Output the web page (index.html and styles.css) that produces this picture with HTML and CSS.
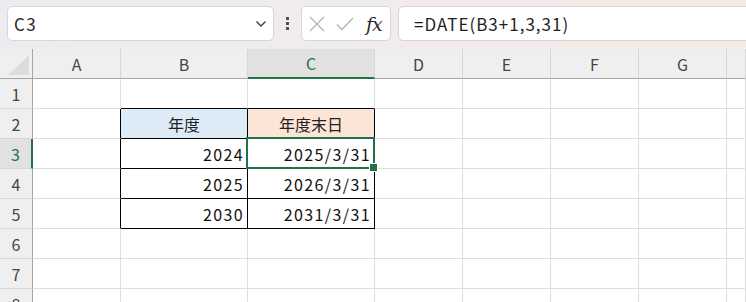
FILE: index.html
```html
<!DOCTYPE html>
<html lang="ja">
<head>
<meta charset="utf-8">
<link rel="stylesheet" href="styles.css">
</head>
<body>
<div class="topbar">
  <div class="namebox">
    <span class="namebox-text">C3</span>
    <svg class="chev" width="12" height="8" viewBox="0 0 12 8"><path d="M1.5 1.5 L6 6 L10.5 1.5" fill="none" stroke="#3a3a3a" stroke-width="1.3"/></svg>
  </div>
  <div class="dots"><i></i><i></i><i></i></div>
  <div class="fxbtns">
    <svg class="ico" width="16" height="16" viewBox="0 0 16 16"><path d="M1 1 L15 15 M15 1 L1 15" stroke="#b4b4b4" stroke-width="1.3" fill="none"/></svg>
    <svg class="ico" width="18" height="16" viewBox="0 0 18 16"><path d="M1 8.5 L6 13.5 L17 2" stroke="#b4b4b4" stroke-width="1.3" fill="none"/></svg>
    <span class="fx">fx</span>
  </div>
  <div class="formula">=DATE(B3+1,3,31)</div>
</div>
<div class="sheet">
  <div class="corner"><span class="tri"></span></div>
  <div class="ch">A</div>
  <div class="ch">B</div>
  <div class="ch ch-sel">C</div>
  <div class="ch">D</div>
  <div class="ch">E</div>
  <div class="ch">F</div>
  <div class="ch">G</div>
  <div class="ch"></div>

  <div class="rh">1</div>
  <div class="c"></div><div class="c bb"></div><div class="c bb"></div><div class="c"></div><div class="c"></div><div class="c"></div><div class="c"></div><div class="c"></div>

  <div class="rh">2</div>
  <div class="c br"></div><div class="c t hb">年度</div><div class="c t ho">年度末日</div><div class="c"></div><div class="c"></div><div class="c"></div><div class="c"></div><div class="c"></div>

  <div class="rh rh-sel">3</div>
  <div class="c br"></div><div class="c t num">2024</div><div class="c t num sel">2025/3/31</div><div class="c"></div><div class="c"></div><div class="c"></div><div class="c"></div><div class="c"></div>

  <div class="rh">4</div>
  <div class="c br"></div><div class="c t num">2025</div><div class="c t num">2026/3/31</div><div class="c"></div><div class="c"></div><div class="c"></div><div class="c"></div><div class="c"></div>

  <div class="rh">5</div>
  <div class="c br"></div><div class="c t num">2030</div><div class="c t num">2031/3/31</div><div class="c"></div><div class="c"></div><div class="c"></div><div class="c"></div><div class="c"></div>

  <div class="rh">6</div>
  <div class="c"></div><div class="c"></div><div class="c"></div><div class="c"></div><div class="c"></div><div class="c"></div><div class="c"></div><div class="c"></div>

  <div class="rh">7</div>
  <div class="c"></div><div class="c"></div><div class="c"></div><div class="c"></div><div class="c"></div><div class="c"></div><div class="c"></div><div class="c"></div>

  <div class="rh">8</div>
  <div class="c"></div><div class="c"></div><div class="c"></div><div class="c"></div><div class="c"></div><div class="c"></div><div class="c"></div><div class="c"></div>
</div>
</body>
</html>
```
FILE: styles.css
```css
* { box-sizing: border-box; }
html, body { margin: 0; padding: 0; }
body {
  width: 746px;
  height: 302px;
  overflow: hidden;
  background: #ffffff;
  font-family: "Noto Sans CJK JP", "Noto Sans", sans-serif;
  color: #1a1a1a;
}
.topbar {
  height: 49px;
  display: flex;
  align-items: flex-start;
  padding: 6px 0 0 7px;
  background: linear-gradient(90deg, #eeebf0 0%, #f1ecec 50%, #f3ebe6 100%);
  overflow: hidden;
}
.namebox {
  width: 267px;
  height: 35px;
  background: #fff;
  border: 1px solid #d9d5d8;
  border-radius: 5px;
  display: flex;
  align-items: center;
  justify-content: space-between;
  padding: 0 6px 0 6px;
}
.namebox-text {
  font-size: 17px;
  color: #262626;
  line-height: 1;
  letter-spacing: 1.5px;
}
.chev { margin-top: 1px; }
.dots {
  width: 27px;
  height: 35px;
  display: flex;
  flex-direction: column;
  align-items: center;
  justify-content: center;
  gap: 2px;
}
.dots i {
  display: block;
  width: 3px;
  height: 3px;
  background: #505050;
}
.fxbtns {
  width: 90px;
  height: 35px;
  background: #fff;
  border: 1px solid #d9d5d8;
  border-radius: 5px;
  display: flex;
  align-items: center;
  padding: 0 0 0 7px;
  gap: 11px;
}
.ico { display: block; }
.fx {
  font-family: "DejaVu Serif", "Liberation Serif", serif;
  font-style: italic;
  font-size: 19px;
  color: #2a2a2a;
  margin-left: 1px;
  letter-spacing: -1px;
}
.formula {
  flex: 1 0 auto;
  margin-left: 7px;
  margin-right: -10px;
  height: 35px;
  background: #fff;
  border: 1px solid #d9d5d8;
  border-radius: 5px;
  padding-left: 15px;
  display: flex;
  align-items: center;
  font-size: 17px;
  letter-spacing: 1px;
  color: #1e1e1e;
}
.sheet {
  display: grid;
  grid-template-columns: 33px 88px 127px 127px 88px 88px 88px 88px 1fr;
  grid-auto-rows: 30px;
}
.sheet > div {
  border-right: 1px solid #dedede;
  border-bottom: 1px solid #dedede;
  display: flex;
  align-items: center;
  font-size: 16px;
}
.corner {
  background: #efefef;
  position: relative;
  border-right-color: #a6a6a6 !important;
  border-bottom-color: #a6a6a6 !important;
}
.tri {
  position: absolute;
  left: 8px;
  top: 6px;
  width: 0;
  height: 0;
  border-style: solid;
  border-width: 0 0 20px 21px;
  border-color: transparent transparent #dcdcdc transparent;
}
.ch {
  background: #efefef;
  justify-content: center;
  color: #454545;
  border-right-color: #d6d6d6 !important;
  border-bottom-color: #a6a6a6 !important;
}
.ch-sel {
  background: #e1e1e1;
  color: #217346;
  border-bottom: 2px solid #217346 !important;
}
.rh {
  background: #efefef;
  justify-content: center;
  color: #454545;
  border-right-color: #a6a6a6 !important;
  border-bottom-color: #d6d6d6 !important;
}
.rh-sel {
  background: #e1e1e1;
  color: #217346;
  border-right: 2px solid #217346 !important;
}
.c { background: #fff; }
.bb { border-bottom-color: #000 !important; }
.br { border-right-color: #000 !important; }
.t {
  border-right-color: #000 !important;
  border-bottom-color: #000 !important;
  color: #111;
  font-size: 17px;
}
.hb { background: #ddebf7; justify-content: center; color: #222; }
.ho { background: #fce4d6; justify-content: center; color: #222; }
.num {
  justify-content: flex-end;
  padding-right: 3px;
  letter-spacing: 1.4px;
}
.sel { position: relative; }
.sel::before {
  content: "";
  position: absolute;
  left: -2px;
  top: -2px;
  right: -1px;
  bottom: -1px;
  border: 2px solid #217346;
  z-index: 2;
}
.sel::after {
  content: "";
  position: absolute;
  right: -4px;
  bottom: -4px;
  width: 7px;
  height: 7px;
  background: #217346;
  border: 1px solid #fff;
  z-index: 3;
}
```
